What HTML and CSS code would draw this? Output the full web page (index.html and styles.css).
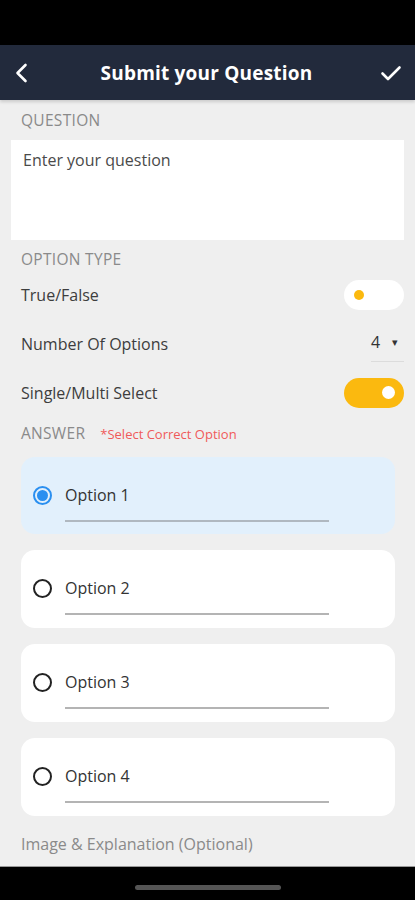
FILE: index.html
```html
<!DOCTYPE html>
<html lang="en">
  <head>
    <meta charset="UTF-8" />
    <meta name="viewport" content="width=device-width, initial-scale=1.0" />
    <title>Submit your Question</title>
    <link rel="stylesheet" href="styles.css">
  </head>
  <body>
    <div class="status-bar"></div>

    <!-- Top bar -->
    <header class="app-bar">
      <svg class="icon" width="24" height="24" viewBox="0 0 24 24">
        <path d="M15.5 4 L7.5 12 L15.5 20" fill="none" stroke="#fff" stroke-width="2.6" stroke-linecap="round" stroke-linejoin="round" />
      </svg>
      <h1>Submit your Question</h1>
      <svg class="icon" width="24" height="24" viewBox="0 0 24 24">
        <path d="M3.5 12.5 L9 18 L20.5 6.5" fill="none" stroke="#fff" stroke-width="2.6" stroke-linecap="round" stroke-linejoin="round" />
      </svg>
    </header>

    <main class="content">
      <div class="section-label">QUESTION</div>
      <div class="question-box">Enter your question</div>

      <div class="section-label short">OPTION TYPE</div>
      <div class="setting-row">
        <span>True/False</span>
        <div class="toggle"><div class="knob"></div></div>
      </div>
      <div class="setting-row">
        <span>Number Of Options</span>
        <div class="dropdown">4 <span class="caret">&#9662;</span></div>
      </div>
      <div class="setting-row">
        <span>Single/Multi Select</span>
        <div class="toggle on"><div class="knob"></div></div>
      </div>

      <div class="answer-label">
        <span class="section-label">ANSWER</span>
        <span class="hint">*Select Correct Option</span>
      </div>

      <div class="options">
        <div class="option-card selected">
          <div class="radio checked"></div>
          <div class="option-field">Option 1</div>
        </div>
        <div class="option-card">
          <div class="radio"></div>
          <div class="option-field">Option 2</div>
        </div>
        <div class="option-card">
          <div class="radio"></div>
          <div class="option-field">Option 3</div>
        </div>
        <div class="option-card">
          <div class="radio"></div>
          <div class="option-field">Option 4</div>
        </div>
      </div>

      <div class="extra-label">Image &amp; Explanation (Optional)</div>
    </main>

    <div class="nav-bar"><div class="home-pill"></div></div>
  </body>
</html>
```

FILE: styles.css
```css
* {
  margin: 0;
  padding: 0;
  box-sizing: border-box;
  font-family: "Open Sans", Roboto, sans-serif;
}

body {
  width: 415px;
  height: 900px;
  background: #efefef;
  display: flex;
  flex-direction: column;
  overflow: hidden;
}

.status-bar {
  height: 45px;
  background: #000;
}

.app-bar {
  height: 55px;
  background: #222a3c;
  display: flex;
  align-items: center;
  justify-content: space-between;
  padding: 0 12px 0 10px;
  box-shadow: 0 2px 3px rgba(0, 0, 0, 0.15);
}

.app-bar h1 {
  color: #fff;
  font-size: 19px;
  font-weight: 700;
  letter-spacing: 0.2px;
}

.content {
  flex: 1;
  padding: 0 11px;
}

.section-label {
  color: #8a8a8a;
  font-size: 15.5px;
  padding: 9px 10px 0;
  height: 40px;
  letter-spacing: 0.3px;
}

.section-label.short {
  height: 30px;
  padding-top: 8px;
}

.question-box {
  background: #fff;
  height: 100px;
  padding: 9px 12px;
  color: #4a4a4a;
  font-size: 16px;
}

.setting-row {
  height: 49px;
  display: flex;
  align-items: center;
  justify-content: space-between;
  padding-left: 10px;
  color: #3d3d3d;
  font-size: 16px;
}

.toggle {
  width: 60px;
  height: 30px;
  border-radius: 15px;
  background: #fff;
  display: flex;
  align-items: center;
  padding-left: 10px;
}

.toggle .knob {
  width: 10px;
  height: 10px;
  border-radius: 50%;
  background: #fbb90f;
}

.toggle.on {
  background: #fbb90f;
  justify-content: flex-end;
  padding: 0 9px 0 0;
}

.toggle.on .knob {
  width: 13px;
  height: 13px;
  background: #fff;
}

.dropdown {
  width: 33px;
  height: 31px;
  margin-top: 6px;
  border-bottom: 1px solid #dcdcdc;
  color: #333;
  font-size: 16px;
  display: flex;
  justify-content: space-between;
  padding: 0 6px 0 0;
}

.caret {
  font-size: 11px;
  margin-top: 3px;
}

.answer-label {
  display: flex;
  align-items: baseline;
  height: 40px;
}

.answer-label .section-label {
  height: auto;
  padding-top: 5px;
}

.hint {
  color: #ef5a5a;
  font-size: 13px;
  margin-left: 5px;
}

.options {
  display: flex;
  flex-direction: column;
  gap: 16px;
  padding: 0 9px 0 10px;
}

.option-card {
  height: 78px;
  background: #fff;
  border-radius: 14px;
  display: flex;
  align-items: flex-start;
  padding: 29px 0 0 12px;
}

.option-card.selected {
  background: #e2f0fc;
  height: 77px;
}

.radio {
  width: 19px;
  height: 19px;
  border-radius: 50%;
  border: 2px solid #222;
  margin-right: 13px;
  flex-shrink: 0;
}

.radio.checked {
  border-color: #2a8ff0;
  display: flex;
  align-items: center;
  justify-content: center;
}

.radio.checked::after {
  content: "";
  width: 11px;
  height: 11px;
  border-radius: 50%;
  background: #2a8ff0;
}

.option-field {
  width: 264px;
  height: 38px;
  margin-top: -2px;
  border-bottom: 2px solid #b4b4b4;
  color: #333;
  font-size: 16px;
}

.option-card.selected .option-field {
  border-bottom-color: #b0b8c0;
}

.extra-label {
  color: #8a8a8a;
  font-size: 16px;
  padding: 17px 10px 0;
}

.nav-bar {
  height: 34px;
  background: #000;
  display: flex;
  align-items: center;
  justify-content: center;
  border-top: 1px solid #999;
}

.home-pill {
  width: 146px;
  height: 5px;
  border-radius: 3px;
  background: #555;
  margin-top: 8px;
}
```
